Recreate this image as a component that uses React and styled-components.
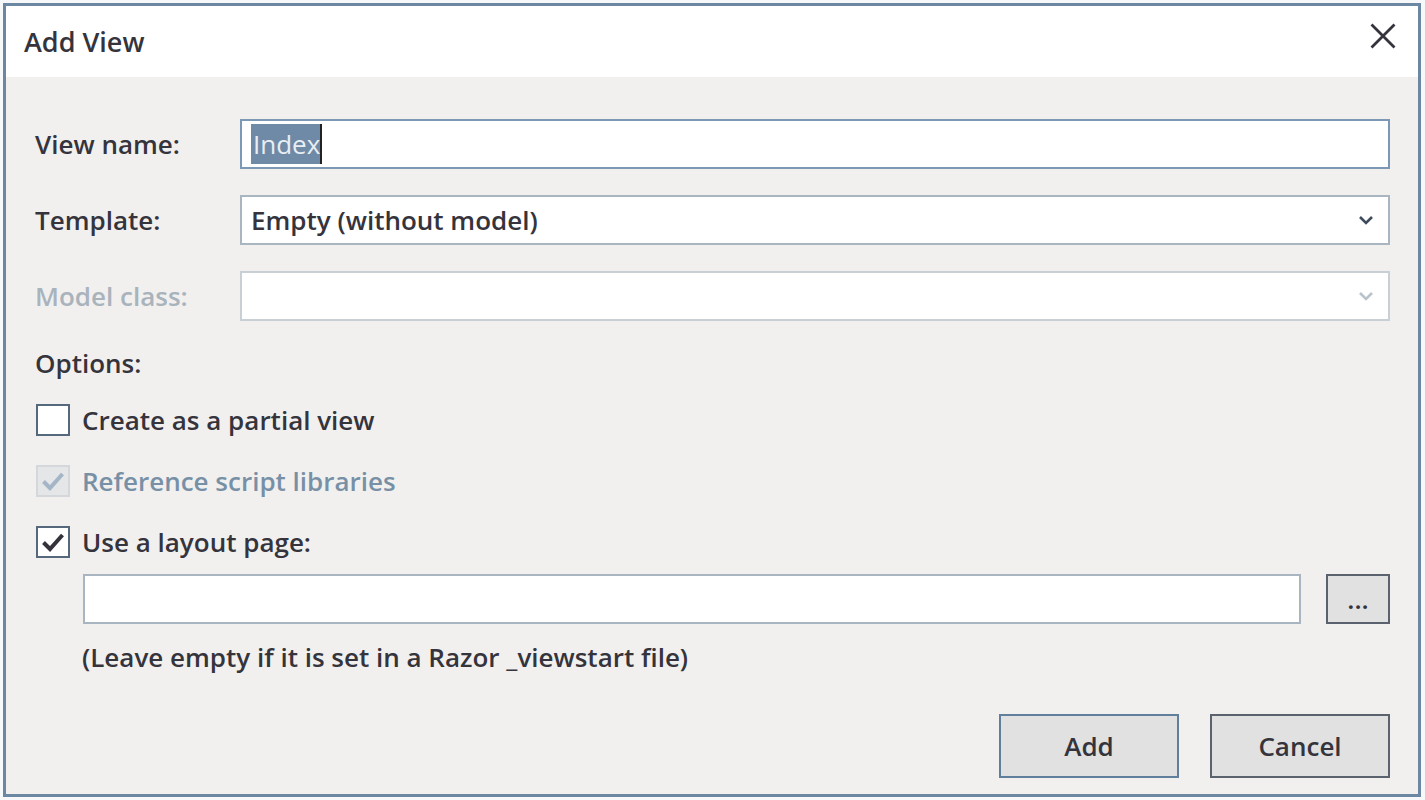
import React from 'react'
import styled, { createGlobalStyle, css } from 'styled-components'

const color = {
  text: '#35343c',
  muted: '#a9b3bc',
  mutedBlue: '#7890a6',
  frame: '#6c87a1',
  body: '#f1f0ef',
  field: '#a9b5c0',
  fieldFocus: '#7b99b6',
  fieldOff: '#c8cfd5',
  select: '#6e8aa7',
}

const GlobalStyle = createGlobalStyle`
  html, body {
    margin: 0;
    padding: 0;
    background: #f7f8fa;
  }
  body {
    font-family: "Open Sans", "Noto Sans", sans-serif;
    font-weight: 600;
    color: ${color.text};
  }
`

const Window = styled.div`
  margin: 3px 4px 0 3px;
  height: 794px;
  box-sizing: border-box;
  border: 3px solid ${color.frame};
  background: ${color.body};
  display: flex;
  flex-direction: column;
`

const TitleBar = styled.div`
  height: 71px;
  background: #fff;
  display: flex;
  align-items: center;
  justify-content: space-between;
  padding: 0 21px 0 18px;
  font-size: 27px;
`

const Close = styled.button`
  border: 0;
  background: none;
  padding: 0;
  width: 28px;
  height: 28px;
  display: flex;
  align-items: center;
  justify-content: center;
  margin-top: -12px;

  svg {
    stroke: ${color.text};
    stroke-width: 2.8;
  }
`

const Body = styled.div`
  flex: 1;
  padding: 42px 28px 0 29px;
  display: flex;
  flex-direction: column;
  font-size: 26px;
`

const Row = styled.div`
  display: grid;
  grid-template-columns: 205px 1fr;
  align-items: center;
  margin-bottom: 26px;
`

const Label = styled.label`
  color: ${(p) => (p.$disabled ? color.muted : color.text)};
`

const Field = styled.div`
  height: 50px;
  box-sizing: border-box;
  background: #fff;
  border: 2px solid ${(p) => (p.$focus ? color.fieldFocus : p.$disabled ? color.fieldOff : color.field)};
  display: flex;
  align-items: center;
  justify-content: space-between;
  padding: 0 14px 0 9px;
  flex: 1;
`

const Selected = styled.span`
  background: ${color.select};
  color: #e9eef3;
  font-weight: 400;
  padding: 2px 0 2px 2px;
  border-right: 2px solid #222;
  line-height: 34px;
`

const Chevron = styled.svg`
  width: 16px;
  height: 10px;
  fill: none;
  stroke: ${(p) => (p.$disabled ? '#b9c3cc' : '#3d4b5c')};
  stroke-width: 2.6;
`

const Section = styled.div`
  margin: -2px 0 21px;
`

const CheckRow = styled.div`
  display: flex;
  align-items: center;
  gap: 12px;
  height: 36px;
  margin-bottom: 25px;
  color: ${(p) => (p.$disabled ? color.mutedBlue : color.text)};
`

const Box = styled.span`
  width: 34px;
  height: 32px;
  margin-left: 1px;
  box-sizing: border-box;
  display: flex;
  align-items: center;
  justify-content: center;
  background: #fff;
  border: 2px solid #56687b;

  ${(p) =>
    p.$disabled &&
    css`
      background: #e4e6e8;
      border-color: #d4d8dc;
    `}

  svg {
    width: 24px;
    height: 20px;
    fill: none;
    stroke: ${(p) => (p.$disabled ? '#a3b5c6' : '#36323c')};
    stroke-width: 4;
  }
`

const Indent = styled.div`
  padding-left: 48px;
  display: flex;
  flex-direction: column;
`

const PathRow = styled.div`
  display: flex;
  align-items: center;
  gap: 25px;
  margin-top: -11px;
`

const Button = styled.button`
  font-family: inherit;
  font-weight: 600;
  font-size: 26px;
  color: ${color.text};
  background: #e1e1e1;
  border: 2px solid ${(p) => (p.$default ? '#5f7f9c' : '#59626d')};
  box-sizing: border-box;
  width: ${(p) => p.$w || '180px'};
  height: ${(p) => p.$h || '64px'};
  padding: 0;
  cursor: default;
`

const Hint = styled.div`
  margin-top: 15px;
  margin-left: -1px;
`

const Footer = styled.div`
  margin-top: auto;
  margin-bottom: 16px;
  display: flex;
  justify-content: flex-end;
  gap: 31px;
`

const CheckIcon = () => (
  <svg viewBox="0 0 24 20">
    <path d="M2.5 10.5l6.5 6.5L21.5 3" />
  </svg>
)

const Check = ({ checked, disabled, children }) => (
  <CheckRow $disabled={disabled}>
    <Box $disabled={disabled}>{checked ? <CheckIcon /> : null}</Box>
    {children}
  </CheckRow>
)

const Select = ({ value, disabled }) => (
  <Field $disabled={disabled}>
    <span>{value}</span>
    <Chevron $disabled={disabled} viewBox="0 0 16 10">
      <path d="M2 2l6 6 6-6" />
    </Chevron>
  </Field>
)

const App = () => (
  <>
    <GlobalStyle />
    <Window>
      <TitleBar>
        <span>Add View</span>
        <Close aria-label="Close">
          <svg width="26" height="26" viewBox="0 0 26 26">
            <path d="M1.5 1.5l23 23M24.5 1.5l-23 23" />
          </svg>
        </Close>
      </TitleBar>
      <Body>
        <Row>
          <Label>View name:</Label>
          <Field $focus>
            <span>
              <Selected>Index</Selected>
            </span>
          </Field>
        </Row>
        <Row>
          <Label>Template:</Label>
          <Select value="Empty (without model)" />
        </Row>
        <Row>
          <Label $disabled>Model class:</Label>
          <Select value="" disabled />
        </Row>
        <Section>Options:</Section>
        <Check>Create as a partial view</Check>
        <Check checked disabled>
          Reference script libraries
        </Check>
        <Check checked>Use a layout page:</Check>
        <Indent>
          <PathRow>
            <Field />
            <Button $w="64px" $h="50px">
              ...
            </Button>
          </PathRow>
          <Hint>(Leave empty if it is set in a Razor _viewstart file)</Hint>
        </Indent>
        <Footer>
          <Button $default>Add</Button>
          <Button>Cancel</Button>
        </Footer>
      </Body>
    </Window>
  </>
)

export default App
